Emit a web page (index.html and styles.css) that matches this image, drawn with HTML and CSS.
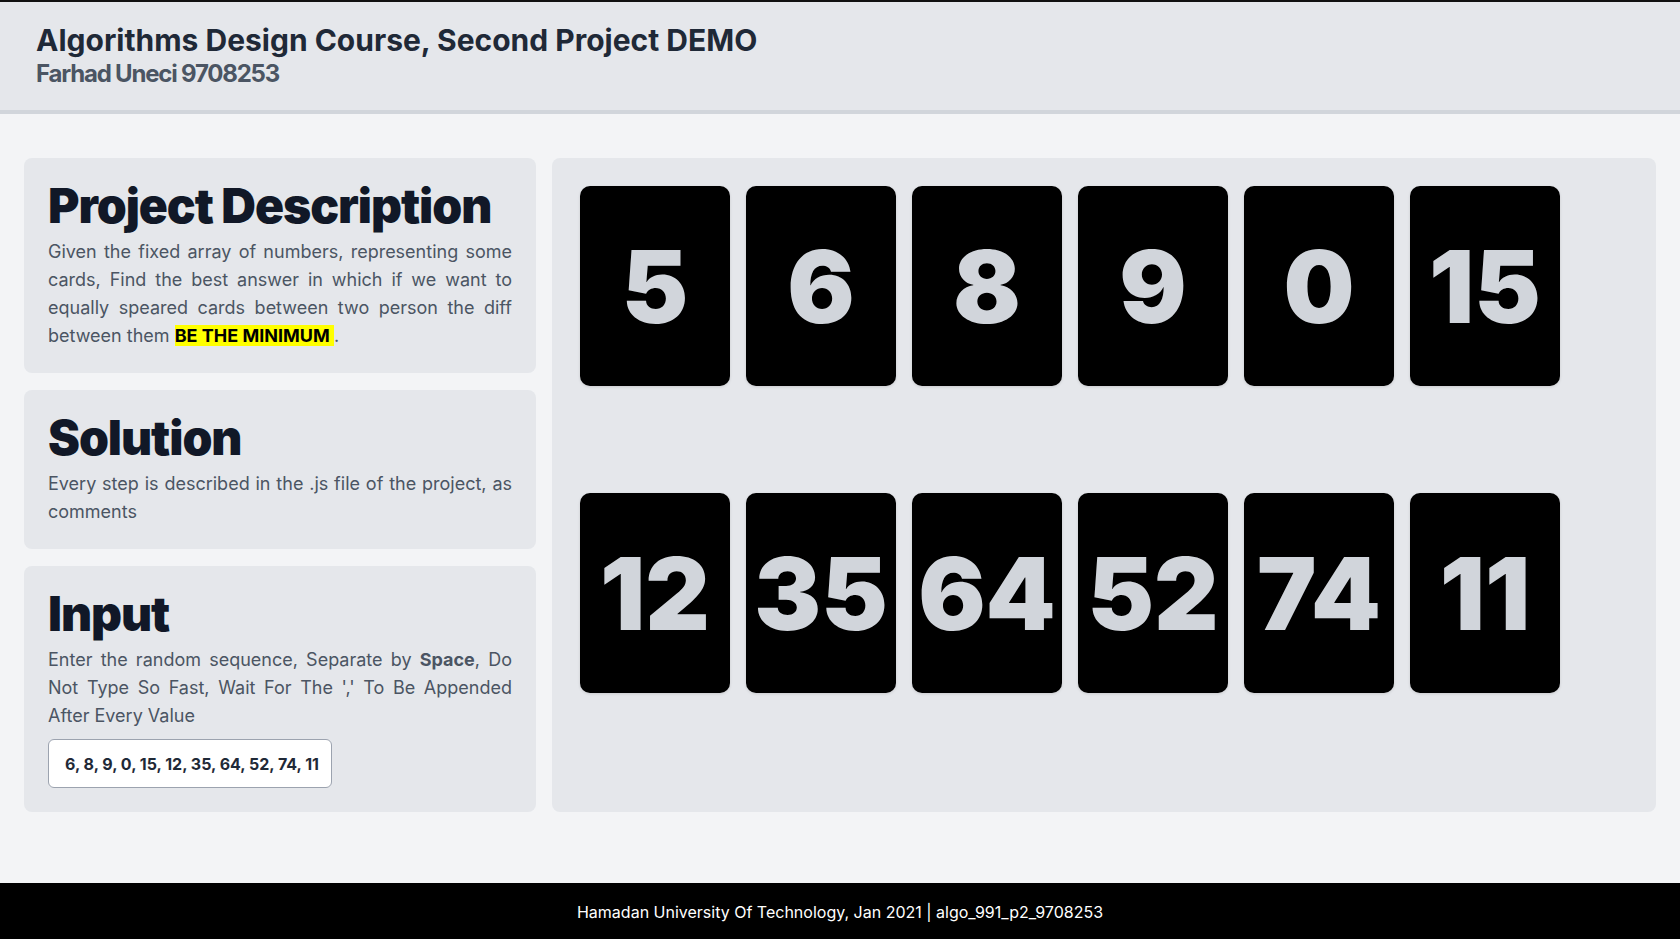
FILE: index.html
```html
<!DOCTYPE html>
<html lang="en">
<head>
<meta charset="utf-8">
<title>Algorithms Design Course, Second Project DEMO</title>
<link rel="stylesheet" href="styles.css">
</head>
<body>
<header class="top">
  <h1 class="title">Algorithms Design Course, Second Project DEMO</h1>
  <h2 class="subtitle">Farhad Uneci 9708253</h2>
</header>
<main class="main">
  <section class="side">
    <div class="box">
      <h3 class="box-title">Project Description</h3>
      <p class="box-text">Given the fixed array of numbers, representing some cards, Find the best answer in which if we want to equally speared cards between two person the diff between them <span class="mark">BE THE MINIMUM </span>.</p>
    </div>
    <div class="box">
      <h3 class="box-title">Solution</h3>
      <p class="box-text">Every step is described in the .js file of the project, as comments</p>
    </div>
    <div class="box">
      <h3 class="box-title">Input</h3>
      <p class="box-text">Enter the random sequence, Separate by <b>Space</b>, Do Not Type So Fast, Wait For The ',' To Be Appended After Every Value</p>
      <div class="field"><div class="field-inner"><span class="field-value">5, 6, 8, 9, 0, 15, 12, 35, 64, 52, 74, 11</span></div></div>
    </div>
  </section>
  <section class="board">
    <div class="card">5</div>
    <div class="card">6</div>
    <div class="card">8</div>
    <div class="card">9</div>
    <div class="card">0</div>
    <div class="card">15</div>
    <div class="card">12</div>
    <div class="card">35</div>
    <div class="card">64</div>
    <div class="card">52</div>
    <div class="card">74</div>
    <div class="card">11</div>
  </section>
</main>
<footer class="foot">Hamadan University Of Technology, Jan 2021 | algo_991_p2_9708253</footer>
</body>
</html>
```

FILE: styles.css
```css
* { box-sizing: border-box; }
html, body { margin: 0; padding: 0; }
body {
  font-family: Inter, "Noto Sans", sans-serif;
  background: #f3f4f6;
  min-height: 100vh;
  display: flex;
  flex-direction: column;
}
.top {
  background: #e5e7eb;
  border-top: 2px solid #111111;
  border-bottom: 4px solid #d1d5db;
  padding: 20px 36px;
}
.title {
  margin: 0;
  font-size: 30px;
  line-height: 36px;
  font-weight: 700;
  color: #1f2937;
}
.subtitle {
  margin: 0;
  font-size: 24px;
  line-height: 32px;
  font-weight: 700;
  color: #4b5563;
  letter-spacing: -0.05em;
}
.main {
  flex: 1;
  display: flex;
  align-items: flex-start;
  gap: 16px;
  padding: 44px 24px 0 24px;
}
.side {
  width: 512px;
  flex: none;
  display: flex;
  flex-direction: column;
  gap: 17px;
}
.box {
  background: #e5e7eb;
  border-radius: 8px;
  padding: 24px 24px 23px 24px;
}
.box-title {
  margin: 0 0 8px 0;
  font-size: 48px;
  line-height: 48px;
  font-weight: 900;
  letter-spacing: -0.022em;
  color: #111827;
}
.box-text {
  margin: 0;
  font-size: 18px;
  line-height: 28px;
  color: #4b5563;
  text-align: justify;
}
.box-text b { font-weight: 700; }
.mark {
  background: #ffff00;
  color: #000000;
  font-weight: 700;
}
.field {
  margin: 9px 0 1px 0;
  width: 284px;
  height: 49px;
  background: #ffffff;
  border: 1px solid #9ca3af;
  border-radius: 6px;
  padding: 0 12px;
  display: flex;
  align-items: center;
}
.field-inner {
  flex: 1;
  overflow: hidden;
  display: flex;
  justify-content: flex-end;
}
.field-value {
  white-space: nowrap;
  font-size: 16px;
  font-weight: 700;
  color: #1f2937;
}
.board {
  flex: 1;
  align-self: stretch;
  background: #e5e7eb;
  border-radius: 8px;
  padding: 28px 28px;
  display: grid;
  grid-template-columns: repeat(6, 150px);
  grid-template-rows: 200px 200px;
  column-gap: 16px;
  row-gap: 107px;
  align-content: start;
}
.card {
  background: #000000;
  border-radius: 10px;
  box-shadow: 0 1px 3px rgba(0, 0, 0, 0.12);
  display: flex;
  align-items: center;
  justify-content: center;
  color: #d1d5db;
  font-size: 100px;
  font-weight: 900;
}
.foot {
  margin-top: 71px;
  background: #000000;
  color: #ffffff;
  height: 57px;
  display: flex;
  align-items: center;
  justify-content: center;
  font-size: 16px;
}
```
